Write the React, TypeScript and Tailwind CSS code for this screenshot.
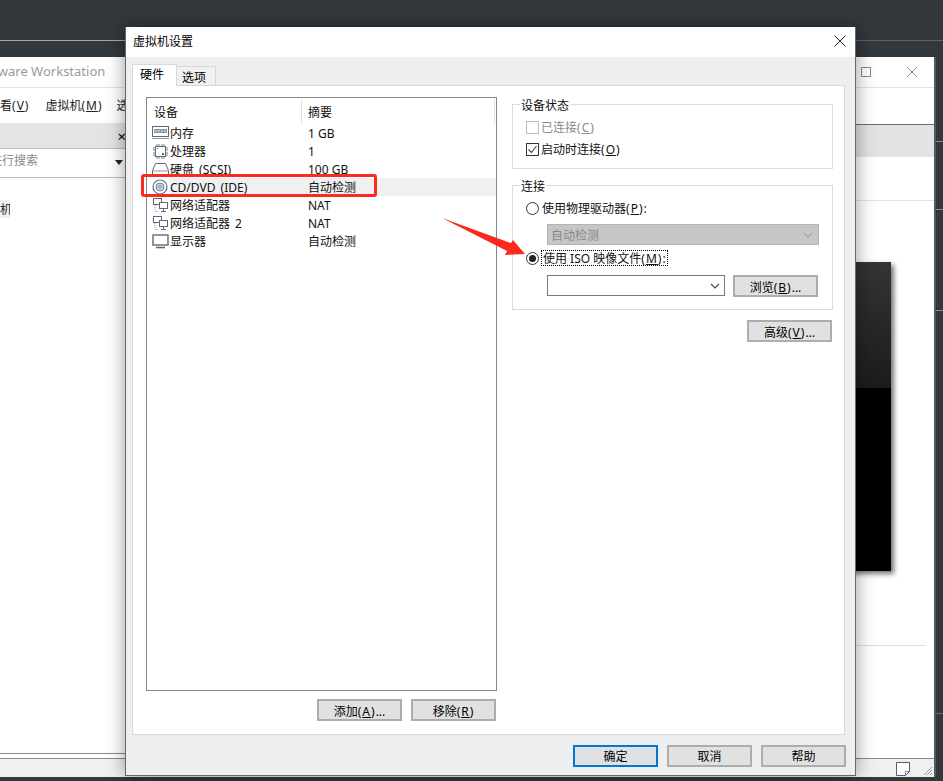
import React from "react";

const Btn = ({ children, cls = "" }: { children: React.ReactNode; cls?: string }) => (
  <div className={`w-[85px] h-[22px] border-2 border-[#adadad] bg-[#e1e1e1] flex items-center justify-center pt-[2px] text-[12px] leading-[16px] text-black ${cls}`}>
    {children}
  </div>
);

const Mn = ({ k }: { k: string }) => (
  <span className="tracking-[1px]">(<u>{k}</u>)</span>
);

const Tx = ({ children, cls = "" }: { children: React.ReactNode; cls?: string }) => (
  <span className={`pt-[2px] whitespace-pre ${cls}`}>{children}</span>
);

const IRam = () => (
  <svg width="17" height="14" viewBox="0 0 17 14" fill="none">
    <rect x="0.5" y="0.500" width="16" height="10" fill="#fff" stroke="#5d6b78" />
    <rect x="2" y="3" width="13" height="4" fill="#8996a2" />
    <path d="M3 5h2M6 5h2M9 5h2M12 5h2" stroke="#e6ebef" />
    <path d="M0 12.500h17" stroke="#8a96a1" />
  </svg>
);
const ICpu = () => (
  <svg width="17" height="17" viewBox="0 0 17 17" fill="none">
    <rect x="3.500" y="3.500" width="10" height="10" fill="#fff" stroke="#5d6b78" />
    <path d="M5 1v2M7 1v2M10 1v2M12 1v2M5 14v2M7 14v2M10 14v2M12 14v2M1 5h2M1 7h2M1 10h2M1 12h2M14 5h2M14 7h2M14 10h2M14 12h2" stroke="#7d8a96" />
    <rect x="5" y="5" width="1" height="1" fill="#5d6b78" />
    <rect x="10" y="10" width="2" height="2" fill="#5d6b78" />
  </svg>
);
const IHdd = () => (
  <svg width="17" height="14" viewBox="0 0 17 14" fill="none">
    <path d="M3.500 1.500h10l3 7v4H.5v-4z" fill="#fff" stroke="#5d6b78" />
    <path d="M1 9h15" stroke="#8a96a1" />
  </svg>
);
const ICd = () => (
  <svg width="16" height="16" viewBox="0 0 16 16" fill="none">
    <circle cx="8" cy="8" r="7" fill="#fff" stroke="#607486" strokeWidth="1.200" />
    <circle cx="8" cy="8" r="4" fill="#c3d4e2" stroke="#6f8598" />
    <circle cx="8" cy="8" r="1.300" fill="#fff" stroke="#607486" strokeWidth=".8" />
  </svg>
);
const INet = () => (
  <svg width="18" height="16" viewBox="0 0 18 16" fill="none">
    <rect x="1.500" y="1.500" width="8" height="6" fill="#fff" stroke="#5d6b78" />
    <rect x="7.500" y="5.500" width="8" height="6" fill="#fff" stroke="#5d6b78" />
    <path d="M11.500 12v2M9 14.500h5" stroke="#5d6b78" />
    <path d="M3 8v6.500h3" stroke="#8a96a1" strokeDasharray="1 1" />
  </svg>
);
const IMon = () => (
  <svg width="18" height="15" viewBox="0 0 18 15" fill="none">
    <rect x="1" y="1" width="15" height="10" fill="#fff" stroke="#5d6b78" strokeWidth="1.400" />
    <path d="M4 13.500h9" stroke="#5d6b78" strokeWidth="1.600" />
  </svg>
);

const Row = ({ icon, name, value, active }: { icon: React.ReactNode; name: string; value: string; active?: boolean }) => (
  <div className="h-[18px] flex items-center">
    <div className="w-[23px] pl-[5px] shrink-0 flex items-center">{icon}</div>
    <div className={`flex-1 h-full flex items-center ${active ? "bg-[#f0f0f0]" : ""}`}>
      <Tx cls="w-[138px] shrink-0 [word-spacing:2px]">{name}</Tx>
      <Tx>{value}</Tx>
    </div>
  </div>
);

const Radio = ({ on }: { on?: boolean }) => (
  <span className="w-[13px] h-[13px] rounded-full border border-[#333] bg-white flex items-center justify-center shrink-0">
    {on && <span className="w-[7px] h-[7px] rounded-full bg-[#222]" />}
  </span>
);

const Chevron = ({ color }: { color: string }) => (
  <svg width="10" height="6" viewBox="0 0 10 6" fill="none">
    <path d="M1 1l4 4 4-4" stroke={color} strokeWidth="1.100" />
  </svg>
);

const Group = ({ title, cls, labelCls = "", children }: { title: string; cls: string; labelCls?: string; children: React.ReactNode }) => (
  <div className={`relative border border-[#dcdcdc] ${cls}`}>
    <span className={`absolute left-[7px] top-[-7px] h-[16px] px-[1px] bg-white leading-[16px] ${labelCls}`}>{title}</span>
    {children}
  </div>
);

export default function App() {
  return (
    <div className="relative w-[943px] h-[781px] overflow-hidden bg-[#33383d] text-[12px] leading-[16px] text-[#111] font-['Noto_Sans','Noto_Sans_CJK_SC',sans-serif]">
      <div className="pt-[40px] flex">
        <div className="w-[130px] h-px bg-[#a6a8aa]" />
        <div className="flex-1 h-px bg-[#5f6367]" />
      </div>
      <div className="mt-[16px] flex items-start">
        {/* background application window */}
        <div className="w-[936px] h-[720px] bg-white border-r-2 border-[#55595c] flex flex-col overflow-hidden">
          <div className="h-[31px] shrink-0 border-b border-[#e3e3e3] flex items-center text-[13px] text-[#9a9a9a]">
            <span className="whitespace-nowrap ml-[-14px] mt-[-2px]">Mware Workstation</span>
            <span className="ml-auto w-[10px] h-[10px] border border-[#888]" />
            <svg className="ml-[36px] mr-[17px]" width="10" height="10" viewBox="0 0 10 10">
              <path d="M0 0l10 10M10 0L0 10" stroke="#888" fill="none" />
            </svg>
          </div>
          <div className="h-[35px] shrink-0 flex items-center text-[#222] whitespace-nowrap">
            <span>看<Mn k="V" /></span>
            <span className="ml-[16px]">虚拟机<Mn k="M" /></span>
            <span className="ml-[14px]">选</span>
          </div>
          <div className="flex-1 flex min-h-0">
            <div className="w-[125px] shrink-0 flex flex-col border-b border-[#8a8a8a] mb-[4px]">
              <div className="h-[26px] bg-[#e3e4e6] border-b border-[#bdbdbd] flex items-center justify-end text-[15px] text-black shrink-0">
                <span className="mr-[-1px]">×</span>
              </div>
              <div className="h-[29px] border-b border-[#bdbdbd] flex items-center text-[#8a8a8a] shrink-0">
                <span className="mt-[-5px] ml-[-10px] whitespace-nowrap">进行搜索</span>
                <span className="ml-auto mr-[2px] mt-[-1px] w-0 h-0 border-x-[4px] border-x-transparent border-t-[5px] border-t-[#222]" />
              </div>
              <div className="mt-[22px] w-[10px] h-[18px] bg-[#f0f0f0] flex items-center overflow-hidden text-[#222] pt-[2px]">机</div>
            </div>
            <div className="flex-1 flex flex-col pt-px">
              <div className="h-[33px] bg-[#e2e3e5] border-t border-[#6e6e6e] shrink-0" />
              <div className="h-[44px] border-b border-[#e3e3e3] shrink-0" />
              <div className="mt-[61px] ml-[175px] w-[591px] h-[309px] shrink-0 flex flex-col shadow-[3px_3px_5px_rgba(0,0,0,0.55)]">
                <div className="h-[126px] bg-gradient-to-b from-[#343434] to-[#1c1c1c]" />
                <div className="flex-1 bg-black" />
              </div>
              <div className="mt-[74px] mr-[8px] h-px bg-[#e0e0e0] shrink-0" />
            </div>
          </div>
          <div className="h-[19px] shrink-0 bg-[#f0f0f0] border-t border-[#8a8a8a] flex items-end justify-end">
            <svg className="mr-[13px] mb-px" width="14" height="14" viewBox="0 0 14 14" fill="none">
              <path d="M.5.5h13v9l-4 4h-9z" fill="#fff" stroke="#4d5f6e" />
              <path d="M9.500 13v-3.500H13" stroke="#7a8a96" />
            </svg>
            <svg className="mr-px mb-px" width="10" height="10" viewBox="0 0 10 10" fill="none">
              <path d="M9 1L1 9M9 4L4 9M9 7L7 9" stroke="#9a9a9a" />
            </svg>
          </div>
        </div>
        {/* sliver of the desktop right of the window */}
        <div className="flex-1 flex flex-col">
          <div className="mt-[84px] h-px bg-[#8a8d90]" />
          <div className="mt-[67px] h-px bg-[#8a8d90]" />
          <div className="mt-[100px] h-px bg-[#8a8d90]" />
          <div className="mt-[402px] h-px bg-[#6a6d70]" />
        </div>
      </div>

      {/* modal dialog */}
      <div className="absolute left-[125px] top-[27px] w-[731px] h-[749px] border-r border-b border-l border-[#666a6e] bg-[#eeeeee] flex flex-col shadow-[0_0_18px_rgba(0,0,0,0.4)]">
        <div className="h-[30px] shrink-0 bg-white flex items-center pl-[7px] pr-[9px] text-[12px] text-black">
          <span className="mt-[-1px]">虚拟机设置</span>
          <svg className="ml-auto mt-[-3px]" width="12" height="12" viewBox="0 0 12 12">
            <path d="M.5.5l11 11M11.500.5l-11 11" stroke="#222" fill="none" />
          </svg>
        </div>
        <div className="mt-[7px] pl-[6px] h-[22px] shrink-0 flex items-end relative z-10">
          <div className="w-[45px] h-[22px] bg-white border-t border-l border-r border-[#d9d9d9] flex items-center pl-[7px] text-black pb-[2px]">硬件</div>
          <div className="w-[39px] h-[19px] bg-[#f0f0f0] border-t border-r border-[#d9d9d9] mb-px flex items-center pl-[5px] pt-[3px] text-black">选项</div>
        </div>
        <div className="mt-[-1px] ml-[6px] w-[713px] h-[650px] shrink-0 bg-white border border-[#d9d9d9] flex pt-[11px] pl-[13px]">
          <div className="w-[351px] shrink-0 flex flex-col">
            <div className="h-[594px] border border-[#82868f] shrink-0 flex flex-col">
              <div className="h-[26px] shrink-0 flex items-center">
                <span className="w-[154px] pl-[7px] pt-[4px]">设备</span>
                <span className="w-px h-[25px] bg-[#e0e0e0]" />
                <span className="pl-[6px] pt-[4px]">摘要</span>
                <span className="ml-auto w-px h-[25px] bg-[#e0e0e0] mr-[1px]" />
              </div>
              <Row icon={<IRam />} name="内存" value="1 GB" />
              <Row icon={<ICpu />} name="处理器" value="1" />
              <Row icon={<IHdd />} name="硬盘 (SCSI)" value="100 GB" />
              <Row icon={<ICd />} name="CD/DVD (IDE)" value="自动检测" active />
              <Row icon={<INet />} name="网络适配器" value="NAT" />
              <Row icon={<INet />} name="网络适配器 2" value="NAT" />
              <Row icon={<IMon />} name="显示器" value="自动检测" />
            </div>
            <div className="mt-[8px] flex justify-end gap-[9px] pr-px">
              <Btn cls="pt-[4px]">添加<Mn k="A" />...</Btn>
              <Btn cls="pt-[4px]">移除<Mn k="R" /></Btn>
            </div>
          </div>
          <div className="ml-[15px] w-[321px] shrink-0 flex flex-col pt-[7px]">
            <Group title="设备状态" cls="h-[65px] pt-[14px] pl-[13px] shrink-0">
              <div className="h-[16px] flex items-center text-[#8a8a8a]">
                <span className="w-[13px] h-[13px] border border-[#bdbdbd] mr-[2px]" />
                <Tx>已连接<Mn k="C" /></Tx>
              </div>
              <div className="mt-[6px] h-[16px] flex items-center">
                <span className="w-[13px] h-[13px] border border-[#333] mr-[2px] flex items-center justify-center">
                  <svg width="11" height="11" viewBox="0 0 11 11" fill="none">
                    <path d="M1.500 5.500l3 3 5-6.500" stroke="#444" strokeWidth="1.100" />
                  </svg>
                </span>
                <Tx>启动时连接<Mn k="O" /></Tx>
              </div>
            </Group>
            <Group title="连接" cls="mt-[16px] h-[125px] pt-[14px] pl-[13px] shrink-0" labelCls="top-[-6px]">
              <div className="h-[16px] flex items-center gap-[3px]">
                <Radio />
                <Tx>使用物理驱动器<Mn k="P" />:</Tx>
              </div>
              <div className="mt-[8px] ml-[21px] w-[272px] h-[21px] bg-[#c6c6c6] border border-[#b4b4b4] flex items-center pl-[3px] pr-[5px] text-[#8a8a8a]">
                <Tx>自动检测</Tx>
                <span className="ml-auto flex"><Chevron color="#a4a4a4" /></span>
              </div>
              <div className="mt-[5px] h-[16px] flex items-center gap-[2px]">
                <Radio on />
                <span className="border border-dotted border-black h-[16px] flex items-center px-px">
                  <Tx>使用 ISO 映像文件<Mn k="M" />:</Tx>
                </span>
              </div>
              <div className="mt-[9px] ml-[21px] flex items-start">
                <div className="w-[178px] h-[21px] border border-[#7a7a7a] bg-white flex items-center justify-end pr-[4px]">
                  <Chevron color="#444" />
                </div>
                <Btn cls="ml-[8px] pt-[4px]">浏览<Mn k="B" />...</Btn>
              </div>
            </Group>
            <Btn cls="mt-[10px] self-end mr-px pt-[4px]">高级<Mn k="V" />...</Btn>
          </div>
        </div>
        <div className="mt-[10px] flex justify-end gap-[9px] pr-[9px] shrink-0">
          <Btn cls="!border-[#0078d7]">确定</Btn>
          <Btn>取消</Btn>
          <Btn>帮助</Btn>
        </div>
      </div>

      {/* annotations */}
      <div className="absolute left-[141px] top-[174px] w-[236px] h-[23px] border-[3px] border-[#fb2a1c] rounded-[3px]" />
      <svg className="absolute left-[440px] top-[215px]" width="90" height="45" viewBox="0 0 90 45">
        <polygon points="2,3 71,28 73,25 85,39 65,40 67,36" fill="#fb2a1c" />
      </svg>
    </div>
  );
}
